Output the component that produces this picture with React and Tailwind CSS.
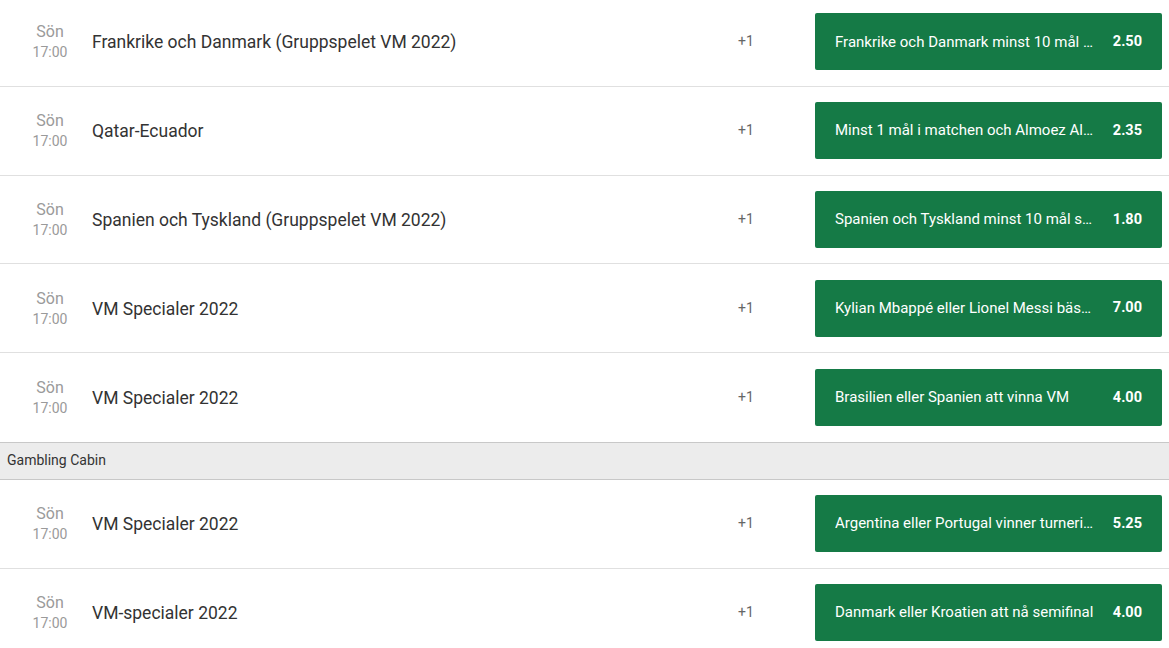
import React from "react";

const group1 = [
  { title: "Frankrike och Danmark (Gruppspelet VM 2022)", bet: "Frankrike och Danmark minst 10 mål sammanlagt", odds: "2.50" },
  { title: "Qatar-Ecuador", bet: "Minst 1 mål i matchen och Almoez Ali gör mål", odds: "2.35" },
  { title: "Spanien och Tyskland (Gruppspelet VM 2022)", bet: "Spanien och Tyskland minst 10 mål sammanlagt", odds: "1.80" },
  { title: "VM Specialer 2022", bet: "Kylian Mbappé eller Lionel Messi bästa målskytt", odds: "7.00" },
  { title: "VM Specialer 2022", bet: "Brasilien eller Spanien att vinna VM", odds: "4.00" },
];

const group2 = [
  { title: "VM Specialer 2022", bet: "Argentina eller Portugal vinner turneringen", odds: "5.25" },
  { title: "VM-specialer 2022", bet: "Danmark eller Kroatien att nå semifinal", odds: "4.00" },
];

function Row({ r, last }) {
  return (
    <div className={"flex items-center h-[88.75px] " + (last ? "" : "border-b border-[#e0e0e0]")}>
      <div className="w-[60px] ml-[20px] flex flex-col items-center leading-none">
        <span className="text-[16px] text-[#9a9a9a]">Sön</span>
        <span className="text-[14px] text-[#9a9a9a] mt-[5px]">17:00</span>
      </div>
      <div className="flex-1 ml-[12px] text-[17.5px] text-[#333333] mt-[1px]">{r.title}</div>
      <div className="w-[60px] text-center text-[14px] text-[#666666] mr-[39px]">+1</div>
      <div className="w-[347px] h-[57px] mr-[7px] bg-[#157a46] rounded-[2px] flex items-center pl-[20px] pr-[20px] text-white">
        <span className="flex-1 min-w-0 truncate text-[15px]">{r.bet}</span>
        <span className="ml-[17px] font-bold text-[14.5px]">{r.odds}</span>
      </div>
    </div>
  );
}

export default function App() {
  return (
    <div className="w-[1169px] h-[648px] bg-white overflow-hidden" style={{ fontFamily: "Roboto, 'Liberation Sans', sans-serif" }}>
      <div className="-mt-[2px]">
        {group1.map((r, i) => (
          <Row key={i} r={r} last={i === group1.length - 1} />
        ))}
        <div className="h-[38px] bg-[#ececec] border-t border-b border-[#c8c8c8] flex items-center pl-[7px] text-[14px] text-[#333333]">
          Gambling Cabin
        </div>
        {group2.map((r, i) => (
          <Row key={i} r={r} last={false} />
        ))}
      </div>
    </div>
  );
}
